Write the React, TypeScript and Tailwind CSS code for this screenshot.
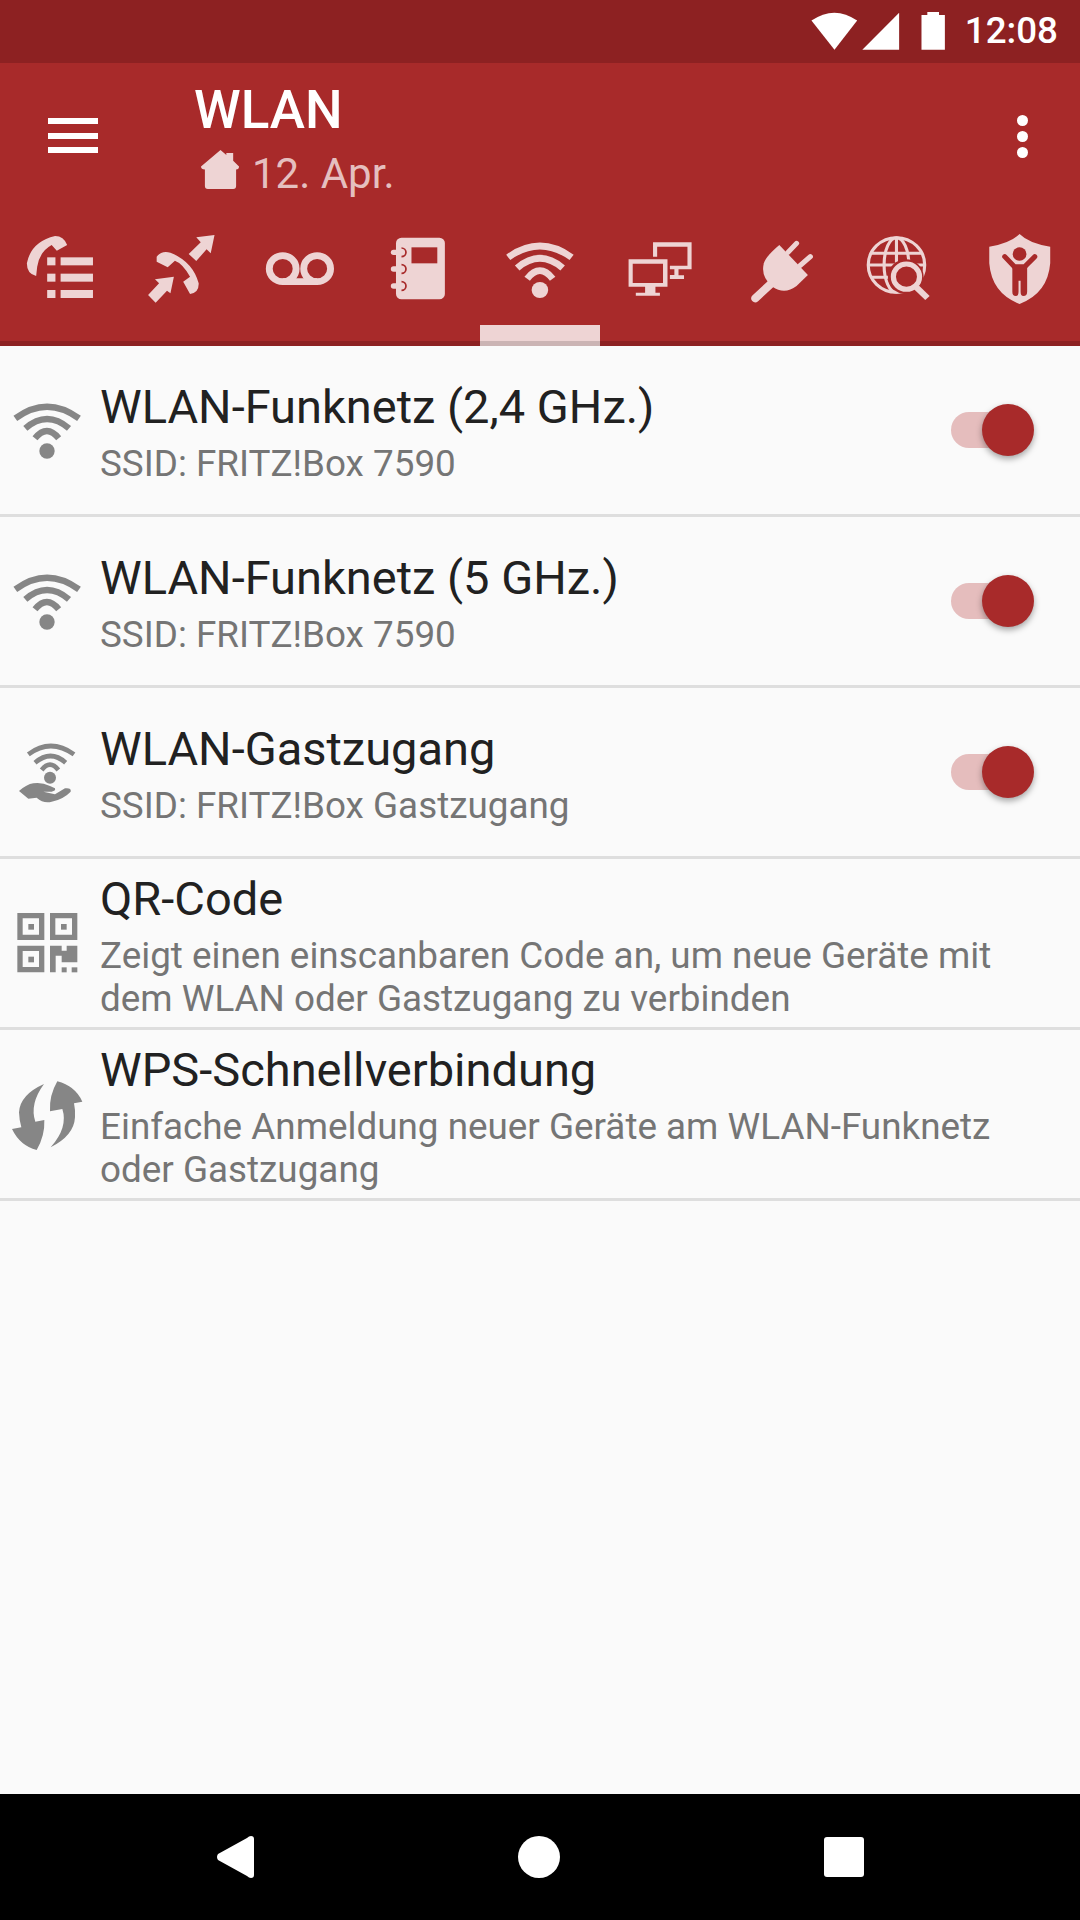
import * as React from "react";

const Glyph = ({ box, children }: { box: string; children: React.ReactNode }) => (
  <svg viewBox={box} preserveAspectRatio="none" className="h-[80px] w-[120px]">
    {children}
  </svg>
);

const PALE = "#eed4d4";
const RED = "#a82a2a";
const GREY = "#868686";

const tabs = [
  <Glyph key="log" box="0 675 348.5 240">
    <g fill={PALE}>
      <rect x="137" y="772" width="24" height="24" />
      <rect x="176" y="772" width="94" height="24" />
      <rect x="137" y="821" width="24" height="24" />
      <rect x="176" y="821" width="94" height="24" />
      <rect x="137" y="870" width="24" height="24" />
      <rect x="176" y="870" width="94" height="24" />
      <path d="M160 708Q185 708 195 735L165 752L150 735Q115 755 108 800L105 828Q78 822 78 790Q90 725 160 708Z" />
    </g>
  </Glyph>,
  <Glyph key="calls" box="348.5 675 348.5 240">
    <g fill={PALE}>
      <polygon points="623,705 570,712 583,727 548,762 570,783 600,748 612,760" />
      <polygon points="505,830 450,838 462,850 430,885 452,908 485,872 495,880" />
      <path d="M455 770Q470 750 495 758Q560 785 577 850Q578 878 552 882L532 845L552 830Q530 790 508 782L487 802L455 785Z" />
    </g>
  </Glyph>,
  <Glyph key="voicemail" box="697 675 348.5 240">
    <g fill="none" stroke={PALE} strokeWidth="20">
      <circle cx="821" cy="806" r="39" />
      <circle cx="921" cy="806" r="39" />
      <path d="M821 845H921" />
    </g>
  </Glyph>,
  <Glyph key="book" box="1045.5 675 348.5 240">
    <rect x="1150" y="713" width="142" height="185" rx="16" fill={PALE} />
    <rect x="1195" y="742" width="75" height="48" fill={RED} />
    {[757, 807, 858].map((y) => (
      <g key={y}>
        <path d={`M1166 ${y - 13}a13 13 0 0 1 0 26`} fill="none" stroke={RED} strokeWidth="5" />
        <rect x="1135" y={y - 8} width="35" height="16" rx="8" fill={PALE} />
      </g>
    ))}
  </Glyph>,
  <Glyph key="wifi" box="-174 675 348.5 240">
    <g fill="none" stroke={PALE} strokeWidth="20">
      <path d="M-92 772Q0 704 92 772" />
      <path d="M-66 804Q0 746 66 804" />
      <path d="M-37 836Q0 788 37 836" />
    </g>
    <circle cx="0" cy="870" r="24" fill={PALE} />
  </Glyph>,
  <Glyph key="network" box="174 675 348.5 240">
    <g fill={PALE} fillRule="evenodd">
      <path d="M257 778H370V860H335V878H348V887H278V878H305V860H257ZM269 791V849H357V791Z" />
      <path d="M328 727H440V808H402V826H418V837H377V825H390V808H377V797H428V740H340V770H328Z" />
    </g>
  </Glyph>,
  <Glyph key="plug" box="522.7 675 348.5 240">
    <path d="M695 735L778 825L745 858Q710 885 675 860Q640 830 650 790Q655 770 695 735Z" fill={PALE} />
    <g stroke={PALE} strokeLinecap="round" fill="none">
      <path d="M720 757L745 730M755 797L785 770" strokeWidth="15" />
      <path d="M625 895L672 850" strokeWidth="24" />
    </g>
  </Glyph>,
  <Glyph key="globe" box="871 675 348.5 240">
    <g fill="none" stroke={PALE} strokeWidth="9">
      <circle cx="1035" cy="795" r="82" />
      <ellipse cx="1035" cy="795" rx="36" ry="82" />
      <path d="M1035 713V877M960 760H1110M953 795H1117M960 832H1110" />
    </g>
    <circle cx="1062" cy="830" r="52" fill={RED} />
    <circle cx="1064" cy="830" r="38" fill="none" stroke={PALE} strokeWidth="15" />
    <path d="M1093 862L1125 894" stroke={PALE} strokeWidth="18" />
  </Glyph>,
  <Glyph key="shield" box="1220 675 348.5 240">
    <path d="M1393 702Q1420 730 1482 740V790Q1475 880 1393 912Q1312 880 1305 790V740Q1365 730 1393 702Z" fill={PALE} />
    <circle cx="1393" cy="762" r="20" fill={RED} />
    <path d="M1350 770L1378 800H1408L1437 770" fill="none" stroke={RED} strokeWidth="15" strokeLinecap="round" />
    <path d="M1372 795H1415V875Q1415 888 1404 888Q1396 888 1396 875V842H1390V875Q1390 888 1382 888Q1372 888 1372 875Z" fill={RED} />
  </Glyph>,
];

const WifiRowIcon = () => (
  <svg viewBox="0 90 300 300" className="h-[100px] w-[100px]">
    <g fill="none" stroke={GREY} strokeWidth="19">
      <path d="M46 205Q141 135 237 205" />
      <path d="M76 235Q141 179 207 235" />
      <path d="M105 265Q141 221 176 265" />
    </g>
    <circle cx="141" cy="303" r="23" fill={GREY} />
  </svg>
);

const GuestIcon = () => (
  <svg viewBox="0 -27 300 300" className="h-[100px] w-[100px]">
    <g fill="none" stroke={GREY} strokeWidth="14">
      <path d="M85 70Q152 20 222 70" />
      <path d="M105 95Q152 55 197 95" />
      <path d="M125 117Q150 85 175 117" />
    </g>
    <circle cx="150" cy="140" r="18" fill={GREY} />
    <path d="M57 180Q80 160 100 157Q125 153 150 165L165 172Q168 180 155 182H130L165 190L195 172Q215 170 212 182Q190 205 155 212Q130 218 110 200L85 203Z" fill={GREY} />
  </svg>
);

const QrIcon = () => (
  <svg viewBox="0 -23 300 300" className="h-[100px] w-[100px]">
    <g fill={GREY} fillRule="evenodd">
      <path d="M52 37H133V118H52ZM68 53V102H117V53Z" />
      <rect x="85" y="70" width="17" height="17" />
      <path d="M150 37H232V118H150ZM166 53V102H216V53Z" />
      <rect x="183" y="70" width="17" height="17" />
      <path d="M52 135H133V215H52ZM68 151V199H117V151Z" />
      <rect x="85" y="168" width="17" height="17" />
      <path d="M150 135H185V150H200V135H232V185H185V165H167V215H150Z" />
      <rect x="185" y="200" width="15" height="15" />
      <rect x="215" y="200" width="17" height="15" />
    </g>
  </svg>
);

const WpsIcon = () => (
  <svg viewBox="0 -20 300 300" className="h-[100px] w-[100px]">
    <g fill={GREY}>
      <path d="M132 40Q60 72 57 125Q58 150 64 170L36 175Q60 225 110 238Q135 195 133 148L106 153Q88 100 132 40Z" />
      <path d="M152 230Q222 195 225 140Q226 115 222 98L247 93Q225 45 172 32Q147 75 150 122L187 115Q205 170 152 230Z" />
    </g>
  </svg>
);

const Toggle = () => (
  <div className="mr-[47px] flex w-[82px] shrink-0 items-center">
    <div className="h-[36px] w-[70px] shrink-0 rounded-full bg-[#e5bdbd]" />
    <div className="ml-[-39px] h-[52px] w-[52px] shrink-0 rounded-full bg-[#a82a2a] shadow-[0_3px_6px_rgba(0,0,0,0.35)]" />
  </div>
);

const rows = [
  { icon: <WifiRowIcon />, title: "WLAN-Funknetz (2,4 GHz.)", lines: ["SSID: FRITZ!Box 7590"], toggle: true },
  { icon: <WifiRowIcon />, title: "WLAN-Funknetz (5 GHz.)", lines: ["SSID: FRITZ!Box 7590"], toggle: true },
  { icon: <GuestIcon />, title: "WLAN-Gastzugang", lines: ["SSID: FRITZ!Box Gastzugang"], toggle: true },
  {
    icon: <QrIcon />,
    title: "QR-Code",
    lines: ["Zeigt einen einscanbaren Code an, um neue Geräte mit", "dem WLAN oder Gastzugang zu verbinden"],
    toggle: false,
  },
  {
    icon: <WpsIcon />,
    title: "WPS-Schnellverbindung",
    lines: ["Einfache Anmeldung neuer Geräte am WLAN-Funknetz", "oder Gastzugang"],
    toggle: false,
  },
];

export default function App() {
  return (
    <div className="flex h-[1920px] w-[1080px] flex-col overflow-hidden bg-[#fafafa] font-['Roboto',sans-serif]">
      <div className="flex h-[63px] items-center justify-end bg-[#8d2122] pr-[22px] text-white">
        <svg viewBox="780 30 410 130" className="mr-[16px] h-[43px] w-[141px]" preserveAspectRatio="none" fill="#fff">
          <path d="M790 62Q857 14 923 62L857 150Z" />
          <path d="M1045 38V150H938Z" />
          <path d="M1110 45H1127V36H1161V45H1178V150H1110Z" />
        </svg>
        <span className="text-[36.75px] font-medium leading-none">12:08</span>
      </div>

      <div className="bg-[#a82a2a]">
        <div className="flex h-[162px]">
          <div className="flex w-[194px] shrink-0 pl-[48px] pt-[55px]">
            <div className="flex h-[35px] w-[50px] flex-col justify-between">
              <div className="h-[6px] bg-white" />
              <div className="h-[6px] bg-white" />
              <div className="h-[6px] bg-white" />
            </div>
          </div>
          <div className="flex-1 pt-[16px]">
            <div className="text-[53px] font-medium leading-[62px] text-white">WLAN</div>
            <div className="mt-[8px] flex items-center pl-[7px] text-[42px] leading-[50px] text-[#e5bfbf]">
              <svg viewBox="0 0 40 40" className="mb-[9px] mr-[12px] h-[39px] w-[39px]" fill={PALE}>
                <path d="M20 0L26 5V3H33V11L39 17Q39 20 36 20V37Q36 40 33 40H7Q4 40 4 37V20Q0 20 0 17Z" />
              </svg>
              12. Apr.
            </div>
          </div>
          <div className="mt-[52px] flex h-[43px] w-[75px] shrink-0 flex-col justify-between pl-[12px]">
            <div className="h-[11px] w-[11px] rounded-full bg-white" />
            <div className="h-[11px] w-[11px] rounded-full bg-white" />
            <div className="h-[11px] w-[11px] rounded-full bg-white" />
          </div>
        </div>

        <div className="grid h-[116px] grid-cols-9">
          {tabs.map((icon, i) => (
            <div key={i} className="flex flex-col">
              <div className="flex-1">{icon}</div>
              <div className={i === 4 ? "h-[16px] bg-[#eed4d4]" : "h-[16px]"} />
            </div>
          ))}
        </div>
        <div className="grid h-[5px] grid-cols-9 bg-[#8d2122]">
          {tabs.map((_, i) => (
            <div key={i} className={i === 4 ? "bg-[#cbb4b4]" : ""} />
          ))}
        </div>
      </div>

      <div className="flex-1">
        {rows.map((row) => (
          <div key={row.title} className="flex h-[171px] items-center border-b-[3px] border-[#dedede]">
            <div className="w-[100px] shrink-0">{row.icon}</div>
            <div className="flex-1 pb-[3px]">
              <div className="text-[47px] leading-[70px] text-[#212121]">{row.title}</div>
              {row.lines.map((line) => (
                <div key={line} className="text-[36.85px] leading-[43px] text-[#757575]">
                  {line}
                </div>
              ))}
            </div>
            {row.toggle && <Toggle />}
          </div>
        ))}
      </div>

      <div className="flex h-[126px] items-center justify-center gap-[264px] bg-black">
        <svg viewBox="0 0 38 42" className="h-[42px] w-[38px]" fill="#fff">
          <path d="M35 0Q38 0 38 3V39Q38 42 35 42Q33 42 31 40L2 24Q0 21 2 18L31 2Q33 0 35 0Z" />
        </svg>
        <div className="h-[42px] w-[42px] rounded-full bg-white" />
        <div className="h-[40px] w-[40px] rounded-[3px] bg-white" />
      </div>
    </div>
  );
}
